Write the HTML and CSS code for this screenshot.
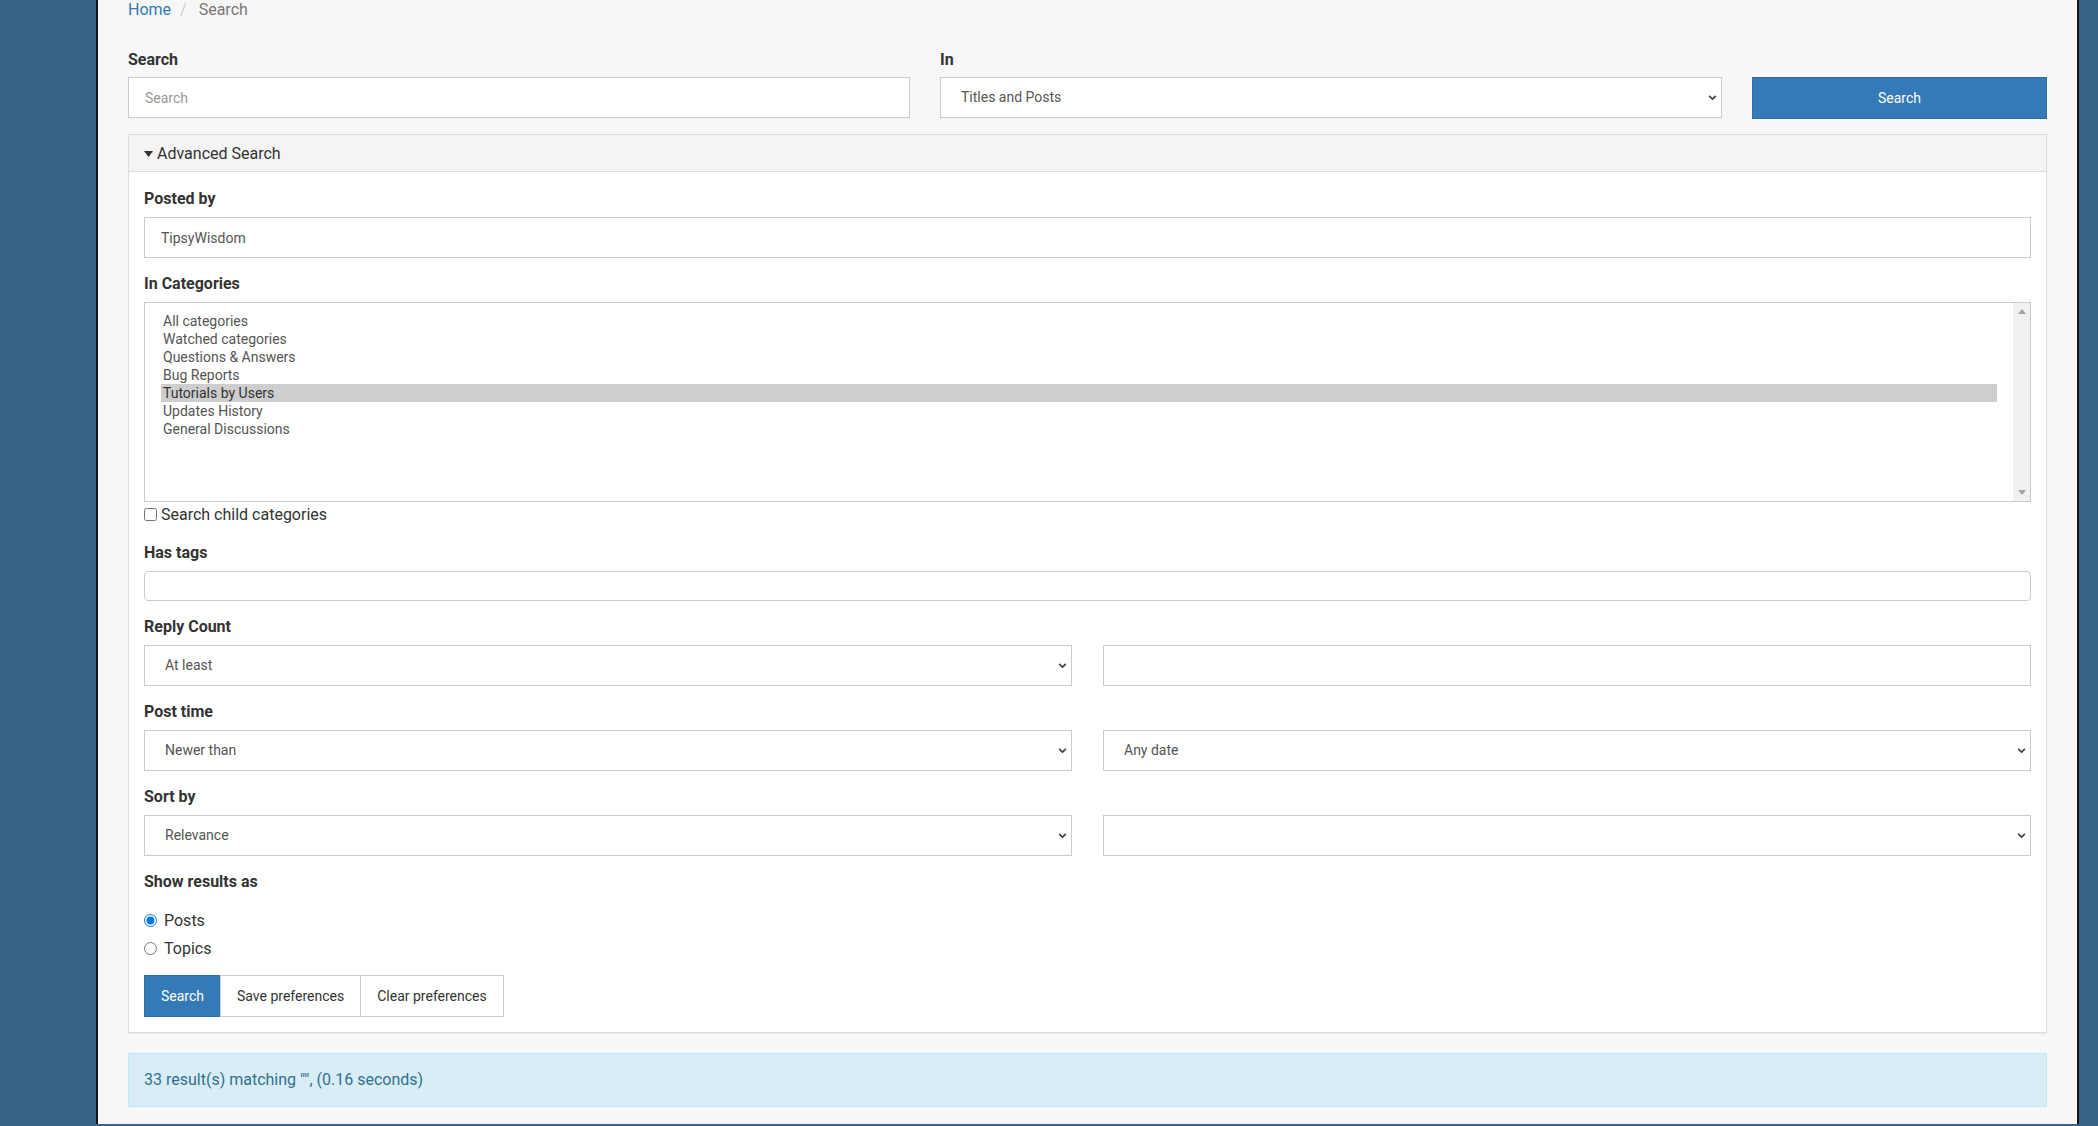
FILE: index.html
```html
<!DOCTYPE html>
<html lang="en">
<head>
<meta charset="utf-8">
<title>Search</title>
<link rel="stylesheet" href="styles.css">
</head>
<body>
<div class="page">
  <ol class="breadcrumb">
    <li><a href="#">Home</a></li>
    <li class="sep">/</li>
    <li class="active">Search</li>
  </ol>

  <form class="search-form">
    <div class="top-row">
      <div class="field">
        <label class="lbl">Search</label>
        <input class="control" type="text" placeholder="Search">
      </div>
      <div class="field">
        <label class="lbl">In</label>
        <div class="select-wrap">
          <div class="control select">Titles and Posts</div>
          <svg class="chev" width="10" height="6" viewBox="0 0 10 6"><path d="M1 1 L5 5 L9 1" fill="none" stroke="#444" stroke-width="2"/></svg>
        </div>
      </div>
      <div class="field btn-field">
        <button type="button" class="btn-primary big">Search</button>
      </div>
    </div>

    <div class="panel">
      <div class="panel-heading">
        <svg class="caret" width="9" height="6" viewBox="0 0 9 6"><path d="M0 0 H9 L4.5 6 Z" fill="#333"/></svg>
        <span>Advanced Search</span>
      </div>
      <div class="panel-body">
        <div class="group">
          <label class="lbl">Posted by</label>
          <input class="control" type="text" value="TipsyWisdom">
        </div>

        <div class="group">
          <label class="lbl">In Categories</label>
          <div class="listbox">
            <div class="options">
              <div class="opt">All categories</div>
              <div class="opt">Watched categories</div>
              <div class="opt">Questions &amp; Answers</div>
              <div class="opt">Bug Reports</div>
              <div class="opt selected">Tutorials by Users</div>
              <div class="opt">Updates History</div>
              <div class="opt">General Discussions</div>
            </div>
            <div class="scrollbar">
              <svg width="8" height="5" viewBox="0 0 8 5"><path d="M0 5 L4 0 L8 5 Z" fill="#a3a3a3"/></svg>
              <svg width="8" height="5" viewBox="0 0 8 5"><path d="M0 0 L8 0 L4 5 Z" fill="#a3a3a3"/></svg>
            </div>
          </div>
          <label class="check"><input type="checkbox">Search child categories</label>
        </div>

        <div class="group">
          <label class="lbl">Has tags</label>
          <input class="control tags" type="text">
        </div>

        <div class="group">
          <label class="lbl">Reply Count</label>
          <div class="pair">
            <div class="select-wrap">
              <div class="control select">At least</div>
              <svg class="chev" width="10" height="6" viewBox="0 0 10 6"><path d="M1 1 L5 5 L9 1" fill="none" stroke="#444" stroke-width="2"/></svg>
            </div>
            <input class="control" type="text">
          </div>
        </div>

        <div class="group">
          <label class="lbl">Post time</label>
          <div class="pair">
            <div class="select-wrap">
              <div class="control select">Newer than</div>
              <svg class="chev" width="10" height="6" viewBox="0 0 10 6"><path d="M1 1 L5 5 L9 1" fill="none" stroke="#444" stroke-width="2"/></svg>
            </div>
            <div class="select-wrap">
              <div class="control select">Any date</div>
              <svg class="chev" width="10" height="6" viewBox="0 0 10 6"><path d="M1 1 L5 5 L9 1" fill="none" stroke="#444" stroke-width="2"/></svg>
            </div>
          </div>
        </div>

        <div class="group">
          <label class="lbl">Sort by</label>
          <div class="pair">
            <div class="select-wrap">
              <div class="control select">Relevance</div>
              <svg class="chev" width="10" height="6" viewBox="0 0 10 6"><path d="M1 1 L5 5 L9 1" fill="none" stroke="#444" stroke-width="2"/></svg>
            </div>
            <div class="select-wrap">
              <div class="control select"></div>
              <svg class="chev" width="10" height="6" viewBox="0 0 10 6"><path d="M1 1 L5 5 L9 1" fill="none" stroke="#444" stroke-width="2"/></svg>
            </div>
          </div>
        </div>

        <div class="group last">
          <label class="lbl">Show results as</label>
          <div class="radios">
            <label class="radio"><input type="radio" name="as" checked>Posts</label>
            <label class="radio"><input type="radio" name="as">Topics</label>
          </div>
          <div class="btn-group">
            <button type="button" class="btn btn-primary">Search</button>
            <button type="button" class="btn btn-default">Save preferences</button>
            <button type="button" class="btn btn-default">Clear preferences</button>
          </div>
        </div>
      </div>
    </div>
  </form>

  <div class="alert">33 result(s) matching "", (0.16 seconds)</div>
</div>
</body>
</html>
```

FILE: styles.css
```css
* { box-sizing: border-box; }

html, body {
  margin: 0;
  padding: 0;
  height: 100%;
  overflow: hidden;
}

body {
  background: #386286;
  font-family: Roboto, "Liberation Sans", Arial, sans-serif;
  font-size: 16px;
  color: #333;
}

.page {
  margin: 0 19px 0 96px;
  min-height: 100%;
  background: #f7f7f7;
  border-left: 2px solid #141414;
  border-right: 2px solid #141414;
  padding: 0 30px;
}

.breadcrumb {
  list-style: none;
  margin: -2px 0 0;
  padding: 0;
  display: flex;
  line-height: 24px;
  font-size: 16px;
}
.breadcrumb a { color: #337ab7; text-decoration: none; }
.breadcrumb .sep { color: #ccc; padding: 0 12px 0 9px; }
.breadcrumb .active { color: #777; }

.search-form { margin: 26px 0 0; }

.top-row {
  display: grid;
  grid-template-columns: 1fr 1fr 295px;
  column-gap: 30px;
  align-items: end;
}

.lbl {
  display: block;
  font-weight: 700;
  font-size: 16px;
  line-height: 24px;
  margin-bottom: 6px;
  color: #333;
}
.top-row .lbl { margin-bottom: 5px; }

.control {
  display: block;
  width: 100%;
  height: 41px;
  border: 1px solid #ccc;
  border-radius: 0;
  background: #fff;
  padding: 0 16px;
  font-family: Roboto, "Liberation Sans", Arial, sans-serif;
  font-size: 14px;
  color: #555;
  outline: none;
}
.control::placeholder { color: #999; }

.select {
  padding-left: 20px;
  line-height: 39px;
}

.select-wrap { position: relative; }
.chev {
  position: absolute;
  right: 5px;
  top: 18px;
  width: 9px;
  height: 5px;
}

.btn-primary.big {
  display: block;
  width: 100%;
  height: 42px;
  margin-bottom: -1px;
  border: 1px solid #2e6da4;
  background: #337ab7;
  color: #fff;
  font-family: Roboto, "Liberation Sans", Arial, sans-serif;
  font-size: 14px;
  line-height: 38px;
  cursor: pointer;
}

.panel {
  margin-top: 16px;
  margin-bottom: 20px;
  background: #fff;
  border: 1px solid #ddd;
  box-shadow: 0 1px 1px rgba(0,0,0,.05);
}

.panel-heading {
  display: flex;
  align-items: center;
  height: 37px;
  padding: 0 15px;
  background: #f4f4f4;
  border-bottom: 1px solid #ddd;
  font-size: 16px;
  color: #333;
}
.caret { margin-right: 4px; margin-top: 1px; }

.panel-body { padding: 15px; }

.group { margin-bottom: 14px; }
.group.last { margin-bottom: 0; }

.listbox {
  display: flex;
  height: 200px;
  border: 1px solid #ccc;
  background: #fff;
}
.options {
  flex: 1;
  padding: 9px 16px;
  font-size: 14px;
  color: #555;
}
.opt {
  height: 18px;
  line-height: 18px;
  padding-left: 2px;
}
.opt.selected { background: #cecece; color: #333; }

.scrollbar {
  width: 17px;
  background: #f1f1f1;
  display: flex;
  flex-direction: column;
  justify-content: space-between;
  align-items: center;
  padding: 6px 0 6px;
}

.check {
  display: flex;
  align-items: center;
  height: 25px;
  font-size: 16px;
  color: #333;
}
.check input { margin: 0 4px 0 0; width: 13px; height: 13px; }

.tags {
  height: 30px;
  border-radius: 4px;
}

.pair {
  display: grid;
  grid-template-columns: 1fr 1fr;
  column-gap: 31px;
}

.radios {
  display: flex;
  flex-direction: column;
  gap: 4px;
  margin-top: 14px;
  margin-bottom: 15px;
}
.radio {
  display: flex;
  align-items: center;
  height: 24px;
  font-size: 16px;
  color: #333;
}
.radio input { margin: 0 7px 0 0; width: 13px; height: 13px; }

.btn-group { display: flex; }
.btn {
  height: 42px;
  padding: 0 16px;
  font-family: Roboto, "Liberation Sans", Arial, sans-serif;
  font-size: 14px;
  border: 1px solid #ccc;
  background: #fff;
  color: #333;
  cursor: pointer;
}
.btn + .btn { margin-left: -1px; }
.btn.btn-primary {
  background: #337ab7;
  border-color: #2e6da4;
  color: #fff;
}

.alert {
  background: #d9edf7;
  border: 1px solid #bce8f1;
  color: #31708f;
  padding: 15px;
  line-height: 22px;
  font-size: 16px;
}
```
